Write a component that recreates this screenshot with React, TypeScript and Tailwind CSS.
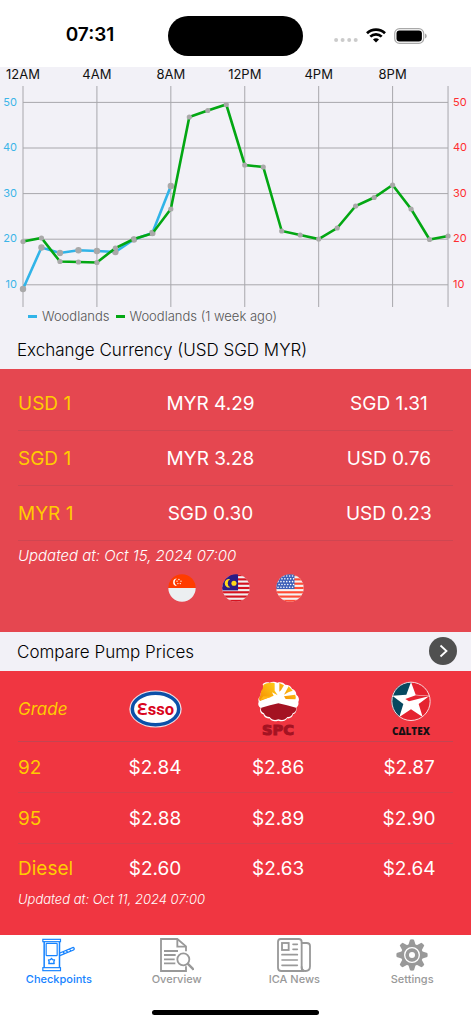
import type { ReactNode } from "react";

const STEP = 18.48;
const X0 = 23;
const lastWeek = [174.5, 171, 194.5, 195, 195.5, 181, 172, 166.5, 142, 50, 43.5, 37.5, 98, 100, 164, 168, 172, 161, 139, 130.5, 118, 142, 172.5, 169];
const today = [222, 180.5, 186, 183.3, 184, 185, 172.5, 166, 119];
const hours = ["12AM", "4AM", "8AM", "12PM", "4PM", "8PM"];
const levels = [50, 40, 30, 20, 10];

const px = (i: number) => X0 + i * STEP;
const toPoints = (ys: number[]) => ys.map((y, i) => `${px(i)},${y}`).join(" ");

function Chart() {
  return (
    <svg viewBox="0 0 471 241" className="block w-full font-['Inter',sans-serif]">
      <g stroke="#a8a7ac" strokeWidth="1">
        {levels.map((v, i) => (
          <line key={v} x1={X0} x2={px(23)} y1={35.4 + i * 45.6} y2={35.4 + i * 45.6} />
        ))}
        {[0, 4, 8, 12, 16, 20, 23].map((h) => (
          <line key={h} x1={px(h)} x2={px(h)} y1="19" y2="240" />
        ))}
      </g>
      <g fontSize="13" fill="#111" textAnchor="middle">
        {hours.map((h, i) => (
          <text key={h} x={px(i * 4)} y="12">{h}</text>
        ))}
      </g>
      <g fontSize="11" fill="#3db5e8" textAnchor="end">
        {levels.map((v, i) => (
          <text key={v} x="17" y={38.5 + i * 45.6}>{v}</text>
        ))}
      </g>
      <g fontSize="11" fill="#ff2d30">
        {levels.map((v, i) => (
          <text key={v} x="453" y={38.5 + i * 45.6}>{v}</text>
        ))}
      </g>
      <polyline points={toPoints(today)} fill="none" stroke="#31b4e8" strokeWidth="2.6" />
      {today.map((y, i) => (
        <circle key={i} cx={px(i)} cy={y} r="3.2" fill="#a9a9a9" />
      ))}
      <polyline points={toPoints(lastWeek)} fill="none" stroke="#03a713" strokeWidth="2.6" />
      {lastWeek.map((y, i) => (
        <circle key={i} cx={px(i)} cy={y} r="2.6" fill="#a9a9a9" />
      ))}
    </svg>
  );
}

function StatusBar() {
  return (
    <header className="grid h-[67px] grid-cols-[1fr_135px_1fr] items-center bg-white pt-1">
      <time className="pl-3 text-center text-[19px] font-semibold text-black">07:31</time>
      <div className="h-10 rounded-full bg-black" />
      <div className="flex items-center pl-[31px]">
        <svg viewBox="0 0 24 16" className="h-4 w-6" fill="#cbcbcb">
          <circle cx="2.1" cy="12" r="2" />
          <circle cx="8.6" cy="12" r="2" />
          <circle cx="15.2" cy="12" r="2" />
          <circle cx="21.7" cy="12" r="2" />
        </svg>
        <svg viewBox="0 0 20 15" className="ml-2 h-[15px] w-5" fill="none" stroke="#000" strokeWidth="2.7">
          <path d="M1 5.2C6 .3 14 .3 19 5.2" />
          <path d="M4.3 8.6c3.2-3.1 8.2-3.1 11.4 0" />
          <path d="M10 14.6l-3-3.2c1.700-1.500 4.300-1.500 6 0z" fill="#000" stroke="none" />
        </svg>
        <svg viewBox="0 0 33 16" className="ml-2 h-4 w-[33px]">
          <rect x=".7" y=".7" width="29" height="14.600" rx="4.800" fill="none" stroke="#a9a9a9" strokeWidth="1.200" />
          <rect x="2.500" y="2.500" width="25.400" height="11" rx="3" fill="#000" />
          <path d="M31 5.500c2.300.9 2.300 4.100 0 5z" fill="#a9a9a9" />
        </svg>
      </div>
    </header>
  );
}

function Stripes({ color, base }: { color: string; base: string }) {
  return (
    <>
      <rect width="82" height="82" fill={base} />
      {[0, 1, 2, 3, 4, 5, 6].map((i) => (
        <rect key={i} y={i * 12.6} width="82" height="6.3" fill={color} />
      ))}
    </>
  );
}

function Flags() {
  return (
    <div className="flex justify-center gap-[26px]">
      <svg viewBox="0 0 82 82" className="size-7">
        <clipPath id="sg"><circle cx="41" cy="41" r="40" /></clipPath>
        <g clipPath="url(#sg)">
          <rect width="82" height="41" fill="#ff3c00" />
          <rect y="41" width="82" height="41" fill="#eceff1" />
          <path d="M26 13a11 11 0 1 0 0 22 12.500 12.500 0 0 1 0-22z" fill="#fff" />
          <g fill="#fff">
            <circle cx="32" cy="16" r="2" />
            <circle cx="26.500" cy="21" r="2" />
            <circle cx="38" cy="21" r="2" />
            <circle cx="29" cy="28" r="2" />
            <circle cx="36" cy="28" r="2" />
          </g>
        </g>
      </svg>
      <svg viewBox="0 0 82 82" className="size-7">
        <clipPath id="my"><circle cx="41" cy="41" r="40" /></clipPath>
        <g clipPath="url(#my)">
          <Stripes color="#d5121f" base="#f1eff0" />
          <rect width="47" height="48" fill="#2b1a86" />
          <path d="M24 15a12.500 12.500 0 1 0 0 24 13.500 13.500 0 0 1 0-24z" fill="#ffd91a" />
          <circle cx="35" cy="27" r="7.500" fill="#ffd91a" />
        </g>
      </svg>
      <svg viewBox="0 0 82 82" className="size-7">
        <clipPath id="us"><circle cx="41" cy="41" r="40" /></clipPath>
        <g clipPath="url(#us)">
          <Stripes color="#ff4b34" base="#f3f3f3" />
          <rect width="54" height="44" fill="#3f60b8" />
          <g fill="#fff">
            {[0, 1, 2, 3, 4].map((r) =>
              [0, 1, 2, 3, 4, 5].map((c) => (
                <circle key={`${r}-${c}`} cx={6 + c * 8.5 + (r % 2) * 3} cy={6 + r * 8.2} r="2.3" />
              )),
            )}
          </g>
        </g>
      </svg>
    </div>
  );
}

function EssoLogo() {
  return (
    <svg viewBox="0 0 160 114" className="inline-block h-[38px] w-[53px]">
      <ellipse cx="80" cy="57" rx="79" ry="56" fill="#f4dfe4" />
      <ellipse cx="80" cy="57" rx="70" ry="47.500" fill="#fff" stroke="#0c50a8" strokeWidth="10.500" />
      <text x="80" y="75" textAnchor="middle" fontSize="50" fontWeight="700" fill="#d9041c" className="font-['Roboto','Noto_Sans',sans-serif]">Ɛsso</text>
    </svg>
  );
}

function SpcLogo() {
  return (
    <svg viewBox="62 168 132 168" className="inline-block h-14 w-11 overflow-visible">
      <defs>
        <linearGradient id="sun" x1="0" x2="1" y1="1" y2="0">
          <stop offset="0" stopColor="#f58a00" />
          <stop offset="1" stopColor="#ffd21c" />
        </linearGradient>
      </defs>
      <path d="M82 178c6-7 14-7 21-5 7-4 16-4 23 0 9-3 18-1 24 6 10 0 17 4 20 12 9 4 13 9 13 18 8 6 10 14 6 22 2 8-1 13-6 17 2 10-2 17-10 20-1 9-9 13-17 12-6 9-15 11-27 7-12 4-21 2-27-7-9 1-16-4-18-12-8-3-12-9-8-19-7-5-9-11-6-19-2-8 0-14 6-18-1-9 2-14 8-17-1-7 0-12-2-17z" fill="#fff" />
      <path d="M78 248l26-7 25-6 26 6 27 7c2 9-2 14-10 17-2 8-8 12-16 11-6 9-15 11-27 7-12 4-20 1-26-7-9 0-15-4-17-11-8-4-11-9-8-17z" fill="#a41322" />
      <path d="M84 180c8-6 24-8 34-5v22l9 14-17-9 5 10-41 16c-5-6-3-12 2-17 0-11 2-16 6-19z" fill="url(#sun)" />
      <path d="M84 214l26 1-36 11z" fill="#ffb514" />
      <path d="M132 174l14 7-9 15-5 4zM160 184l12 13c-9 2-17 6-26 12zM146 214l33-5c3 5 3 9 1 14l-29-1z" fill="url(#sun)" />
      <text x="128" y="330" textAnchor="middle" fontSize="44" fontWeight="700" fill="#a41322" stroke="#a41322" strokeWidth="3" className="font-['DejaVu_Sans',sans-serif]">SPC</text>
    </svg>
  );
}

function CaltexLogo() {
  return (
    <svg viewBox="470 168 120 168" className="inline-block h-14 w-10 overflow-visible">
      <circle cx="530" cy="229" r="58" fill="#e52330" />
      <path d="M530 171a58 58 0 0 0-35 105l35-47z" fill="#06485f" />
      <path d="M530 171l14 38 42 3-33 25 12 39-35-23-35 23 12-39-33-25 42-3z" fill="#fff" />
      <path d="M513 222l31-11 42 2-62 16z" fill="#e52330" />
      <circle cx="530" cy="229" r="57.500" fill="none" stroke="#fbdadd" strokeWidth="3" />
      <text x="530" y="330" textAnchor="middle" fontSize="30" fontWeight="800" fill="#151013" className="font-['Open_Sans',sans-serif]">CΔLTEX</text>
    </svg>
  );
}

const rates = [
  ["USD 1", "MYR 4.29", "SGD 1.31"],
  ["SGD 1", "MYR 3.28", "USD 0.76"],
  ["MYR 1", "SGD 0.30", "USD 0.23"],
];

const pumps = [
  { grade: "92", prices: ["$2.84", "$2.86", "$2.87"], height: "h-[51px]" },
  { grade: "95", prices: ["$2.88", "$2.89", "$2.90"], height: "h-[51px]" },
  { grade: "Diesel", prices: ["$2.60", "$2.63", "$2.64"], height: "h-[47px]" },
];

function ExchangeTable() {
  return (
    <section className="bg-[#e54750] px-[18px] pt-1.5 pb-[30px] text-white">
      <table className="w-full table-fixed border-collapse text-[19px]">
        <colgroup>
          <col className="w-[18%]" />
          <col className="w-[52.5%]" />
          <col className="w-[29.5%]" />
        </colgroup>
        <tbody>
          {rates.map(([from, a, b]) => (
            <tr key={from} className="h-[55px] border-b border-[#cf4651]">
              <th scope="row" className="pt-1 text-left font-normal whitespace-nowrap text-[#ffcc00]">{from}</th>
              <td className="pt-1 text-center">{a}</td>
              <td className="pt-1 text-center">{b}</td>
            </tr>
          ))}
        </tbody>
      </table>
      <p className="mt-[5px] mb-2 text-[15px] leading-5 font-light italic">Updated at: Oct 15, 2024 07:00</p>
      <Flags />
    </section>
  );
}

function PumpTable() {
  return (
    <section className="grow bg-[#f03641] px-[18px] text-white">
      <table className="w-full table-fixed border-separate border-spacing-0 text-[19px]">
        <colgroup>
          <col className="w-[23.2%]" />
          <col className="w-[16.6%]" />
          <col className="w-[40%]" />
          <col className="w-[20.2%]" />
        </colgroup>
        <thead>
          <tr className="h-[71px] *:border-b *:border-[#c44451]">
            <th scope="col" className="pt-2 text-left text-[17px] font-normal text-[#ffcc00] italic">Grade</th>
            <th scope="col" className="pt-1.5"><EssoLogo /></th>
            <th scope="col" className="pt-1.5"><SpcLogo /></th>
            <th scope="col" className="pt-1.5 pl-1"><CaltexLogo /></th>
          </tr>
        </thead>
        <tbody>
          {pumps.map((p) => (
            <tr key={p.grade} className={`${p.height} *:border-b *:border-[#d63f4b] last:*:border-0`}>
              <th scope="row" className="pt-1 text-left font-normal text-[#ffcc00]">{p.grade}</th>
              {p.prices.map((price) => (
                <td key={price} className="pt-1 text-center">{price}</td>
              ))}
            </tr>
          ))}
        </tbody>
      </table>
      <p className="text-[13px] leading-4 font-light italic">Updated at: Oct 11, 2024 07:00</p>
    </section>
  );
}

function BoothIcon() {
  return (
    <svg viewBox="125 24 104 102" className="h-[34px] w-[35px]" fill="none" stroke="currentColor" strokeWidth="3.5">
      <rect x="130" y="28" width="53" height="7" />
      <path d="M134 35v78M180 35v78" strokeWidth="4.500" />
      <rect x="130" y="113" width="53" height="9" />
      <rect x="140" y="40" width="33" height="37" rx="2" />
      <path d="M156 85l3 4 6 1-2 5 1 6-8-1-8 1 1-6-2-5 6-1z" strokeWidth="4" strokeLinejoin="round" />
      <path d="M181 69l40-17c4 1 4 6 1 8l-41 17M191 66l5 6M200 61l5 7M210 57l4 6" strokeWidth="4" />
    </svg>
  );
}

function OverviewIcon() {
  return (
    <svg viewBox="478 24 102 102" className="size-[34px]" fill="none" stroke="currentColor" strokeWidth="5.5">
      <path d="M556 64V49l-26-22h-49v96h75v-14" />
      <path d="M530 27v23h25" />
      <path d="M490 63h42M490 75h35M490 88h32M490 100h34" />
      <circle cx="548" cy="88" r="18" />
      <path d="M561 101l18 18" strokeWidth="7" />
    </svg>
  );
}

function NewsIcon() {
  return (
    <svg viewBox="127 24 102 102" className="size-[34px]" fill="none" stroke="currentColor" strokeWidth="5.5" strokeLinecap="round">
      <path d="M138 27h54q9 0 9 9v79q0 8 9 8h-70q-10 0-10-10V36q0-9 8-9z" />
      <path d="M201 39h15q10 0 10 9v61q0 14-13 14-12 0-12-12" />
      <rect x="142" y="39" width="20" height="21" />
      <path d="M175 43h13M175 58h13M142 74h46M142 90h46M142 106h46" strokeWidth="5" />
    </svg>
  );
}

function GearIcon() {
  return (
    <svg viewBox="-51 -51 102 102" className="size-[34px]">
      <g fill="currentColor">
        <circle r="33" />
        {[0, 45, 90, 135, 180, 225, 270, 315].map((a) => (
          <path key={a} transform={`rotate(${a})`} d="M-11-29l5-17q6-2 12 0l5 17z" />
        ))}
      </g>
      <circle r="22" fill="none" stroke="#fff" strokeWidth="4" />
      <circle r="9" fill="#fff" />
    </svg>
  );
}

const tabs: { label: string; icon: ReactNode; active?: boolean }[] = [
  { label: "Checkpoints", icon: <BoothIcon />, active: true },
  { label: "Overview", icon: <OverviewIcon /> },
  { label: "ICA News", icon: <NewsIcon /> },
  { label: "Settings", icon: <GearIcon /> },
];

export default function App() {
  return (
    <div className="flex min-h-screen flex-col bg-[#f2f1f7] font-['Inter',sans-serif]">
      <StatusBar />
      <main className="flex grow flex-col">
        <Chart />
        <div className="flex items-center pl-7 text-[13px] leading-[17px] font-light text-[#555]">
          <span className="mr-[5px] h-[3px] w-[9px] bg-[#31b4e8]" />
          <span>Woodlands</span>
          <span className="mr-[5px] ml-1.5 h-[3px] w-[9px] bg-[#03a713]" />
          <span>Woodlands (1 week ago)</span>
        </div>
        <h2 className="flex h-11 items-center px-[17px] pt-2 text-[17px] font-light text-black">Exchange Currency (USD SGD MYR)</h2>
        <ExchangeTable />
        <div className="flex h-[39px] items-center justify-between pr-[14px] pl-[17px]">
          <h2 className="pt-1 text-[17px] font-light text-black">Compare Pump Prices</h2>
          <button className="flex size-7 items-center justify-center rounded-full bg-[#505050]">
            <svg viewBox="0 0 28 28" className="size-7" fill="none" stroke="#fff" strokeWidth="1.800">
              <path d="M11.500 8.500l6 5.500-6 5.500" />
            </svg>
          </button>
        </div>
        <PumpTable />
      </main>
      <footer className="h-[89px] bg-white">
        <nav className="grid grid-cols-4 pt-[3px]">
          {tabs.map((t) => (
            <a key={t.label} href="#" className={`flex flex-col items-center ${t.active ? "text-[#1683ff]" : "text-[#999]"}`}>
              {t.icon}
              <span className="text-[11px] leading-[14px] font-medium">{t.label}</span>
            </a>
          ))}
        </nav>
        <div className="mx-auto mt-6 h-[5px] w-[167px] rounded-full bg-black" />
      </footer>
    </div>
  );
}
